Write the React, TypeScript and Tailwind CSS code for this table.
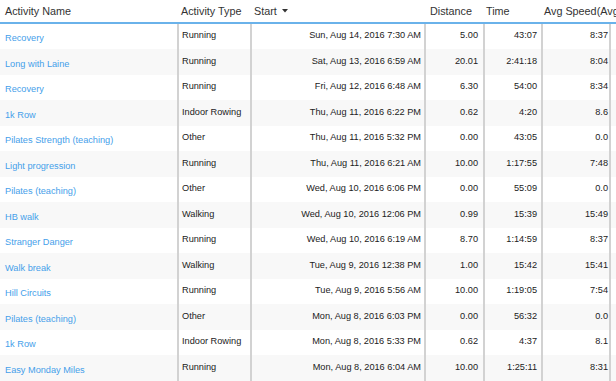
import React from "react";

const rows: [string, string, string, string, string, string][] = [
  ["Recovery", "Running", "Sun, Aug 14, 2016 7:30 AM", "5.00", "43:07", "8:37"],
  ["Long with Laine", "Running", "Sat, Aug 13, 2016 6:59 AM", "20.01", "2:41:18", "8:04"],
  ["Recovery", "Running", "Fri, Aug 12, 2016 6:48 AM", "6.30", "54:00", "8:34"],
  ["1k Row", "Indoor Rowing", "Thu, Aug 11, 2016 6:22 PM", "0.62", "4:20", "8.6"],
  ["Pilates Strength (teaching)", "Other", "Thu, Aug 11, 2016 5:32 PM", "0.00", "43:05", "0.0"],
  ["Light progression", "Running", "Thu, Aug 11, 2016 6:21 AM", "10.00", "1:17:55", "7:48"],
  ["Pilates (teaching)", "Other", "Wed, Aug 10, 2016 6:06 PM", "0.00", "55:09", "0.0"],
  ["HB walk", "Walking", "Wed, Aug 10, 2016 12:06 PM", "0.99", "15:39", "15:49"],
  ["Stranger Danger", "Running", "Wed, Aug 10, 2016 6:19 AM", "8.70", "1:14:59", "8:37"],
  ["Walk break", "Walking", "Tue, Aug 9, 2016 12:38 PM", "1.00", "15:42", "15:41"],
  ["Hill Circuits", "Running", "Tue, Aug 9, 2016 5:56 AM", "10.00", "1:19:05", "7:54"],
  ["Pilates (teaching)", "Other", "Mon, Aug 8, 2016 6:03 PM", "0.00", "56:32", "0.0"],
  ["1k Row", "Indoor Rowing", "Mon, Aug 8, 2016 5:33 PM", "0.62", "4:37", "8.1"],
  ["Easy Monday Miles", "Running", "Mon, Aug 8, 2016 6:04 AM", "10.00", "1:25:11", "8:31"],
];

const grid = "grid grid-cols-[177px_73px_174px_59px_58px_70px_1fr]";

export default function App() {
  return (
    <div
      className="w-[616px] h-[381px] overflow-hidden bg-white text-[#222]"
      style={{ fontFamily: '"Liberation Sans", Arial, sans-serif' }}
    >
      <div className={`${grid} h-[23.5px] border-b-2 border-[#6ab2ea] text-[10.8px] text-[#333] whitespace-nowrap`}>
        <div className="pl-[5px] flex items-center">Activity Name</div>
        <div className="pl-[4px] flex items-center">Activity Type</div>
        <div className="pl-[4px] flex items-center gap-[5px]">
          Start
          <svg width="6" height="4" viewBox="0 0 6 4" className="mt-[1px]">
            <path d="M0 0 L6 0 L3 3.5 Z" fill="#333" />
          </svg>
        </div>
        <div className="pl-[6px] flex items-center">Distance</div>
        <div className="pl-[3px] flex items-center">Time</div>
        <div className="pl-[3px] flex items-center overflow-visible">Avg Speed(Avg</div>
        <div />
      </div>
      {rows.map((r, i) => (
        <div
          key={i}
          className={`${grid} h-[25.5px] text-[9.2px] whitespace-nowrap ${i % 2 === 1 ? "bg-[#f8f8f8]" : "bg-white"}`}
        >
          <div className="pl-[5px] pt-[6px] flex items-center text-[#45a0ea]">{r[0]}</div>
          <div className="border-l-2 border-[#d2d2d2] pl-[3px] flex items-center">{r[1]}</div>
          <div className="border-l-2 border-[#d2d2d2] pr-[3px] flex items-center justify-end">{r[2]}</div>
          <div className="border-l-2 border-[#d2d2d2] pr-[5px] flex items-center justify-end">{r[3]}</div>
          <div className="border-l-2 border-[#d2d2d2] pr-[4px] flex items-center justify-end">{r[4]}</div>
          <div className="border-l-2 border-r-2 border-[#d2d2d2] pr-[1px] flex items-center justify-end">{r[5]}</div>
          <div />
        </div>
      ))}
    </div>
  );
}
